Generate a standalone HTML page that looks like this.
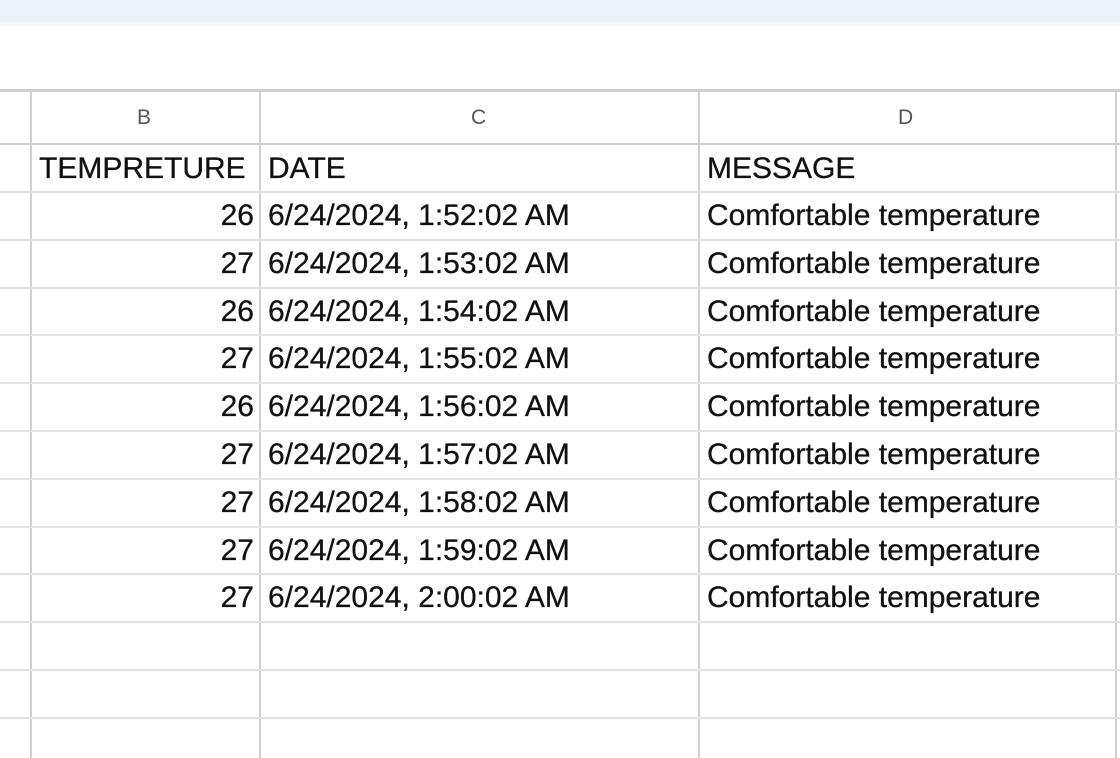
<!DOCTYPE html>
<html><head><style>
body{margin:0;width:1120px;height:758px;overflow:hidden;background:#fff;font-family:"Liberation Sans",Arial,sans-serif;position:relative}
.top{position:absolute;left:0;top:0;width:1120px;height:22px;background:#edf1f8}
.top2{position:absolute;left:0;top:22px;width:1120px;height:4px;background:#f6f8fb}
.h{position:absolute;background:#e2e2e2;height:2px;left:0;width:1120px}
.v{position:absolute;background:#e2e2e2;width:2px;top:89px;height:669px}
.t{position:absolute;font-size:30px;color:#111;line-height:1;white-space:nowrap;-webkit-text-stroke:0.3px #111}
.c{position:absolute;font-size:21px;color:#555;top:106px}
</style></head><body>
<div class="top"></div><div class="top2"></div>
<div class="h" style="top:89px;background:#cfcfcf;height:3px"></div>
<div class="h" style="top:143px;background:#cfcfcf"></div>
<div class="v" style="left:30px;background:#d0d0d0"></div>
<div class="v" style="left:259px;background:#d0d0d0"></div>
<div class="v" style="left:698px;background:#d0d0d0"></div>
<div class="v" style="left:1115px;background:#d0d0d0"></div>
<div class="c" style="left:137px">B</div>
<div class="c" style="left:471px">C</div>
<div class="c" style="left:898px">D</div>
<div class="h" style="top:191px"></div>
<div class="h" style="top:239px"></div>
<div class="h" style="top:287px"></div>
<div class="h" style="top:334px"></div>
<div class="h" style="top:382px"></div>
<div class="h" style="top:430px"></div>
<div class="h" style="top:478px"></div>
<div class="h" style="top:526px"></div>
<div class="h" style="top:573px"></div>
<div class="h" style="top:621px"></div>
<div class="h" style="top:669px"></div>
<div class="h" style="top:717px"></div>
<div class="t" style="left:39px;top:154px">TEMPRETURE</div>
<div class="t" style="left:268px;top:154px">DATE</div>
<div class="t" style="left:707px;top:154px">MESSAGE</div>
<div id="rows"></div>
<script>
var d=[[26,"1:52:02"],[27,"1:53:02"],[26,"1:54:02"],[27,"1:55:02"],[26,"1:56:02"],[27,"1:57:02"],[27,"1:58:02"],[27,"1:59:02"],[27,"2:00:02"]];
var h="";d.forEach(function(r,i){var y=201+i*47.8;
h+='<div class="t" style="right:866px;top:'+y+'px">'+r[0]+'</div><div class="t" style="left:268px;top:'+y+'px">6/24/2024, '+r[1]+' AM</div><div class="t" style="left:707px;top:'+y+'px">Comfortable temperature</div>';});
document.getElementById("rows").innerHTML=h;
</script>
</body></html>
